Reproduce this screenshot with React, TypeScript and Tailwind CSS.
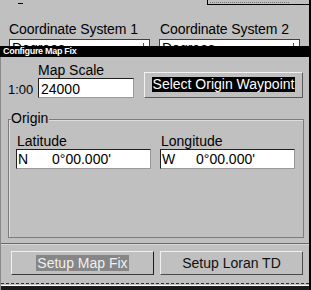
import React from 'react'

const font = "font-['Liberation_Sans',Arial,Helvetica,sans-serif]"

function Dropdown({ label }: { label: string }) {
  return (
    <div className="relative h-[7px] w-[141px] overflow-hidden border-l border-t border-r border-[#404040] bg-white">
      <div className="ml-[2px] mt-[1px] text-[14px] leading-[15px] text-black">{label}</div>
      <div className="absolute right-[5px] top-[3px] h-[4px] w-px bg-[#505050]" />
    </div>
  )
}

function CoordField({ hemi, value, width }: { hemi: string; value: string; width: string }) {
  return (
    <div
      className={`flex h-[20px] items-center border-l border-t border-[#202020] border-b border-r border-b-[#9a9a9a] border-r-[#9a9a9a] bg-white text-[14px] leading-[16px] text-black ${width}`}
    >
      <span className="ml-[1px] w-[34px]">{hemi}</span>
      <span>{value}</span>
    </div>
  )
}

export default function App() {
  return (
    <div className={`${font} flex h-[290px] w-[311px] flex-col overflow-hidden border-r-2 border-black bg-[#c0c0c0] text-black`}>
      {/* window behind the dialog */}
      <div className="h-[46px] shrink-0">
        <div className="relative h-[6px]">
          <div className="absolute left-[18px] top-[3px] h-px w-[5px] bg-black" />
          <div className="absolute left-[207px] top-0 h-[5px] w-px bg-black" />
          <div className="absolute left-[207px] right-0 top-[4px] h-px bg-black" />
          <div className="absolute left-[210px] right-[20px] top-[2px] h-px border-t border-dotted border-[#777]" />
        </div>
        <div className="mt-[16px] flex pl-[9px]">
          <div className="w-[150px]">
            <div className="text-[14px] leading-[15px] tracking-[-0.1px]">Coordinate System 1</div>
            <div className="mt-[2px]">
              <Dropdown label="Degrees" />
            </div>
          </div>
          <div className="w-[150px]">
            <div className="pl-px text-[14px] leading-[15px] tracking-[-0.1px]">Coordinate System 2</div>
            <div className="mt-[2px]">
              <Dropdown label="Degrees" />
            </div>
          </div>
        </div>
      </div>

      {/* dialog title */}
      <div className="h-[11px] shrink-0 bg-black pl-[3px] text-[9px] font-bold leading-[11px] tracking-[-0.3px] text-white">
        Configure Map Fix
      </div>

      {/* dialog body */}
      <div className="flex flex-1 flex-col border-l border-[#8a8a8a]">
        <div className="flex items-start">
          <div>
            <div className="ml-[37px] mt-[6px] text-[14px] leading-[15px]">Map Scale</div>
            <div className="flex items-center">
              <span className="ml-[7px] w-[30px] pt-[3px] text-[13px] leading-[15px]">1:00</span>
              <div className="flex h-[20px] w-[96px] items-center border-l border-t border-[#202020] border-b border-r border-b-[#9a9a9a] border-r-[#9a9a9a] bg-white pl-[2px] pt-[1px] text-[14px] leading-[16px]">
                24000
              </div>
            </div>
          </div>
          <button className="ml-[10px] mt-[15px] flex h-[26px] w-[159px] items-center justify-center border border-t-[#f2f2f2] border-l-[#f2f2f2] border-b-[#5a5a5a] border-r-[#5a5a5a] bg-[#c0c0c0] pb-[1px]">
            <span className="bg-black px-px text-[14px] leading-[15px] text-white">Select Origin Waypoint</span>
          </button>
        </div>

        {/* Origin group */}
        <div className="relative ml-[7px] mt-[21px] h-[119px] w-[296px] border border-[#7c7c7c] shadow-[inset_1px_1px_0_#dcdcdc]">
          <div className="absolute left-[2px] top-[-9px] bg-[#c0c0c0] pr-px text-[14px] leading-[15px]">Origin</div>
          <div className="flex gap-[9px] pl-[7px] pt-[14px]">
            <div>
              <div className="pl-px text-[14px] leading-[15px]">Latitude</div>
              <CoordField hemi="N" value="0°00.000'" width="w-[135px]" />
            </div>
            <div>
              <div className="pl-px text-[14px] leading-[15px]">Longitude</div>
              <CoordField hemi="W" value="0°00.000'" width="w-[135px]" />
            </div>
          </div>
        </div>

        <div className="mt-[5px] h-px bg-[#6a6a6a]" />
        <div className="h-px bg-[#d8d8d8]" />

        <div className="mt-[6px] flex">
          <button className="ml-[10px] flex h-[24px] w-[143px] items-center justify-center border border-t-[#f0f0f0] border-l-[#f0f0f0] border-b-[#3a3a3a] border-r-[#1a1a1a] bg-[#c0c0c0]">
            <span className="bg-[#868686] px-px text-[14px] leading-[16px] text-[#f0f0f0]">Setup Map Fix</span>
          </button>
          <button className="ml-[6px] flex h-[24px] w-[143px] items-center justify-center border border-t-[#f0f0f0] border-l-[#f0f0f0] border-b-[#4a4a4a] border-r-[#4a4a4a] bg-[#c0c0c0]">
            <span className="px-px text-[14px] leading-[16px] text-[#111]">Setup Loran TD</span>
          </button>
        </div>

        <div className="mt-auto">
          <div className="h-[2px] border-t border-dashed border-[#303030]" />
          <div className="h-px bg-white" />
          <div className="h-[4px] bg-[#1a1a1a]" />
        </div>
      </div>
    </div>
  )
}
